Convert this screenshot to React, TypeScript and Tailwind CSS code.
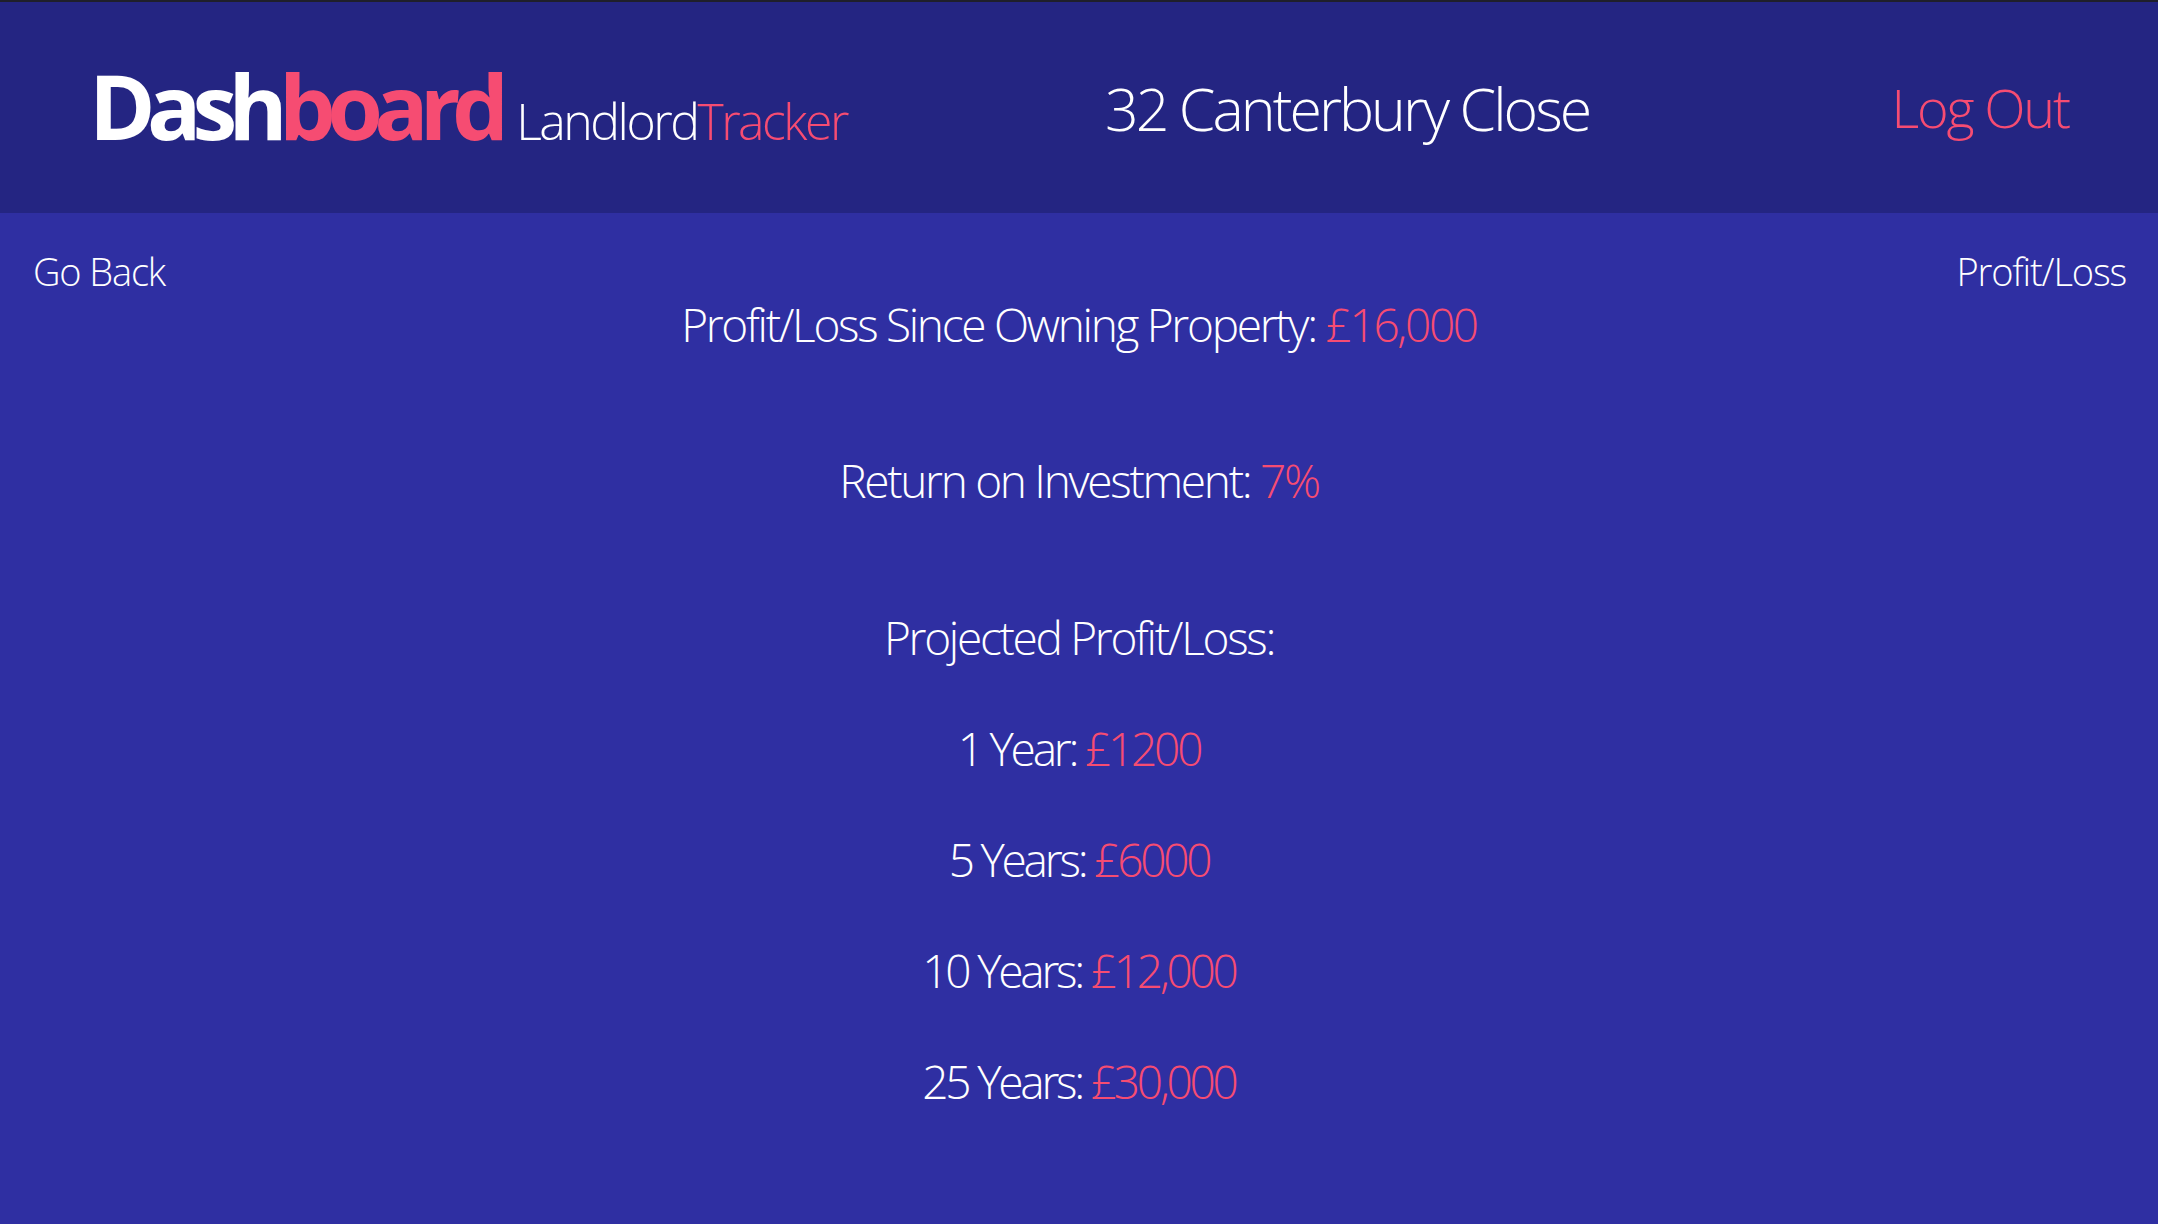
const projections = [
  { label: "1 Year", value: "£1200" },
  { label: "5 Years", value: "£6000" },
  { label: "10 Years", value: "£12,000" },
  { label: "25 Years", value: "£30,000" },
];

function Header() {
  return (
    <header className="flex h-[213px] items-start border-t-2 border-[#1f1f2b] bg-[#242582] pl-[89px] pr-[89px]">
      <div className="mt-[58px] flex w-[1016px] items-baseline">
        <h1 className="text-[90px] font-bold leading-none tracking-[-0.097em] text-white">
          Dash<span className="text-[#f64c72]">board</span>
        </h1>
        <span className="ml-[16px] text-[50px] font-light leading-none tracking-[-0.05em] text-white">
          Landlord<span className="text-[#f64c72]">Tracker</span>
        </span>
      </div>
      <p className="mt-[77px] text-[59px] font-light leading-none tracking-[-0.05em] text-white">
        32 Canterbury Close
      </p>
      <button
        type="button"
        className="ml-auto mt-[78px] text-[54px] font-light leading-none tracking-[-0.04em] text-[#f64c72]"
      >
        Log Out
      </button>
    </header>
  );
}

export default function App() {
  return (
    <div className="min-h-screen bg-[#2f2fa2] font-['Open_Sans',sans-serif] text-white">
      <Header />
      <main>
        <div className="flex justify-between pl-[33px] pr-[32px] pt-[28px] text-[38px] font-light leading-[60px] tracking-[-0.03em]">
          <button type="button">Go Back</button>
          <span>Profit/Loss</span>
        </div>
        <section className="flex flex-col items-center text-[46px] font-light leading-[111px] tracking-[-0.05em]">
          <p className="-mt-[32px] mb-[45px]">
            Profit/Loss Since Owning Property: <span className="text-[#f64c72]">£16,000</span>
          </p>
          <p className="mb-[46px]">
            Return on Investment: <span className="text-[#f64c72]">7%</span>
          </p>
          <p>Projected Profit/Loss:</p>
          {projections.map((row) => (
            <p key={row.label} className="tracking-[-0.07em]">
              {row.label}: <span className="text-[#f64c72]">{row.value}</span>
            </p>
          ))}
        </section>
      </main>
    </div>
  );
}
